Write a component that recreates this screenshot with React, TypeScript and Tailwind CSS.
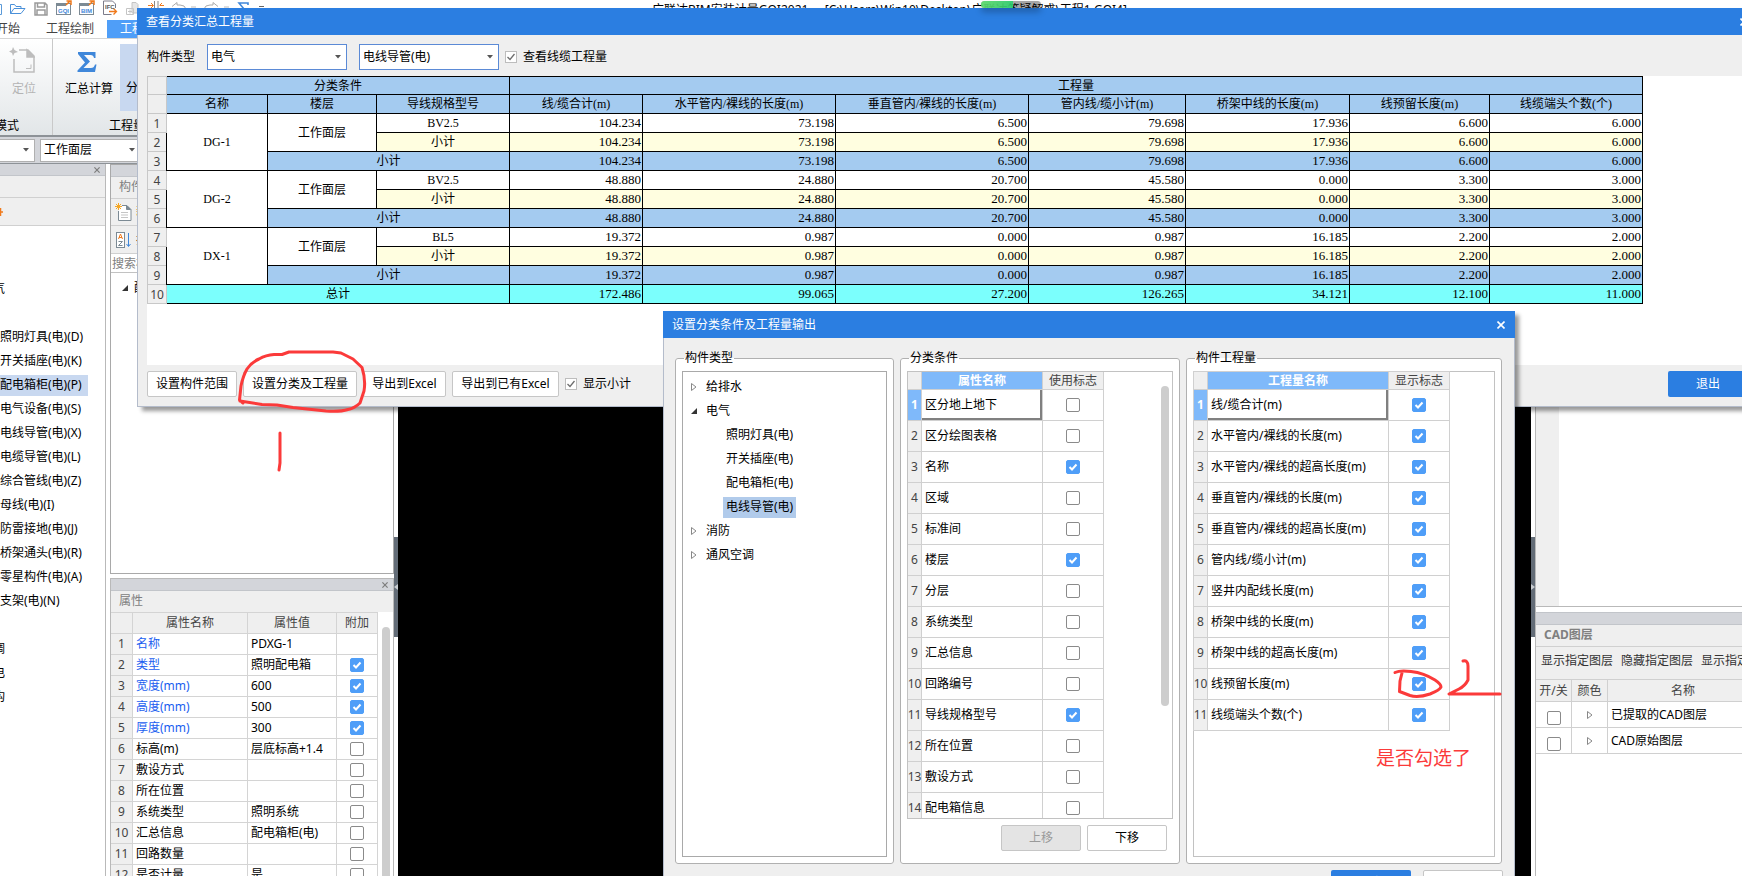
import { type ReactNode } from "react";
import clsx from "clsx";

const navItems = [
  "照明灯具(电)(D)",
  "开关插座(电)(K)",
  "配电箱柜(电)(P)",
  "电气设备(电)(S)",
  "电线导管(电)(X)",
  "电缆导管(电)(L)",
  "综合管线(电)(Z)",
  "母线(电)(I)",
  "防雷接地(电)(J)",
  "桥架通头(电)(R)",
  "零星构件(电)(A)",
  "支架(电)(N)",
];

const quantityHeaders = [
  "线/缆合计(m)",
  "水平管内/裸线的长度(m)",
  "垂直管内/裸线的长度(m)",
  "管内线/缆小计(m)",
  "桥架中线的长度(m)",
  "线预留长度(m)",
  "线缆端头个数(个)",
];

const groups = [
  {
    name: "DG-1",
    floor: "工作面层",
    model: "BV2.5",
    values: ["104.234", "73.198", "6.500", "79.698", "17.936", "6.600", "6.000"],
  },
  {
    name: "DG-2",
    floor: "工作面层",
    model: "BV2.5",
    values: ["48.880", "24.880", "20.700", "45.580", "0.000", "3.300", "3.000"],
  },
  {
    name: "DX-1",
    floor: "工作面层",
    model: "BL5",
    values: ["19.372", "0.987", "0.000", "0.987", "16.185", "2.200", "2.000"],
  },
];

const totals = ["172.486", "99.065", "27.200", "126.265", "34.121", "12.100", "11.000"];

interface FlagRow {
  label: string;
  checked: boolean;
}

const conditions: FlagRow[] = [
  { label: "区分地上地下", checked: false },
  { label: "区分绘图表格", checked: false },
  { label: "名称", checked: true },
  { label: "区域", checked: false },
  { label: "标准间", checked: false },
  { label: "楼层", checked: true },
  { label: "分层", checked: false },
  { label: "系统类型", checked: false },
  { label: "汇总信息", checked: false },
  { label: "回路编号", checked: false },
  { label: "导线规格型号", checked: true },
  { label: "所在位置", checked: false },
  { label: "敷设方式", checked: false },
  { label: "配电箱信息", checked: false },
];

const quantities: FlagRow[] = [
  "线/缆合计(m)",
  "水平管内/裸线的长度(m)",
  "水平管内/裸线的超高长度(m)",
  "垂直管内/裸线的长度(m)",
  "垂直管内/裸线的超高长度(m)",
  "管内线/缆小计(m)",
  "竖井内配线长度(m)",
  "桥架中线的长度(m)",
  "桥架中线的超高长度(m)",
  "线预留长度(m)",
  "线缆端头个数(个)",
].map((label) => ({ label, checked: true }));

const properties: { name: string; value: string; extra?: boolean; blue?: boolean }[] = [
  { name: "名称", value: "PDXG-1", blue: true },
  { name: "类型", value: "照明配电箱", extra: true, blue: true },
  { name: "宽度(mm)", value: "600", extra: true, blue: true },
  { name: "高度(mm)", value: "500", extra: true, blue: true },
  { name: "厚度(mm)", value: "300", extra: true, blue: true },
  { name: "标高(m)", value: "层底标高+1.4", extra: false },
  { name: "敷设方式", value: "", extra: false },
  { name: "所在位置", value: "", extra: false },
  { name: "系统类型", value: "照明系统", extra: false },
  { name: "汇总信息", value: "配电箱柜(电)", extra: false },
  { name: "回路数量", value: "", extra: false },
  { name: "是否计量", value: "是", extra: false },
];

export default function App() {
  return (
    <div className="relative flex h-screen flex-col overflow-hidden bg-white font-['Noto_Sans','Noto_Sans_CJK_SC',sans-serif] text-xs leading-4 text-black">
      <TitleBar />
      <RibbonTabs />
      <Ribbon />
      <FloorBar />
      <div className="flex min-h-0 flex-1">
        <NavPanel />
        <div className="ml-1 flex w-[284px] shrink-0 flex-col">
          <ComponentPanel />
          <PropertyPanel />
        </div>
        <SplitHandle side="left" />
        <div className="min-w-0 flex-1 bg-black" />
        <SplitHandle side="right" />
        <CadPanel />
      </div>
      <SummaryDialog />
      <SettingsDialog />
      <Annotations />
    </div>
  );
}

function Checkbox({ label, checked }: { label: string; checked: boolean }) {
  return (
    <span className="relative inline-block size-[14px] align-middle">
      <input
        type="checkbox"
        aria-label={label}
        defaultChecked={checked}
        className="peer block size-[14px] appearance-none rounded-[2px] border border-[#8a8a8a] bg-white checked:border-[#4f9ef8] checked:bg-[#4f9ef8]"
      />
      <svg
        viewBox="0 0 14 14"
        className="pointer-events-none absolute inset-0 hidden size-[14px] fill-none stroke-white stroke-2 peer-checked:block"
      >
        <path d="M3.5 7 6 9.5 10.5 4.5" />
      </svg>
    </span>
  );
}

function LabelledCheckbox({ label }: { label: string }) {
  return (
    <label className="flex items-center gap-[6px]">
      <span className="relative size-[12px]">
        <input
          type="checkbox"
          defaultChecked
          className="peer block size-[12px] appearance-none border border-[#bdbdbd] bg-white"
        />
        <svg
          viewBox="0 0 12 12"
          className="pointer-events-none absolute inset-0 hidden size-[12px] fill-none stroke-[#6e6e6e] peer-checked:block"
        >
          <path d="M2.5 6 5 8.5 9.5 3" strokeWidth="1.3" />
        </svg>
      </span>
      {label}
    </label>
  );
}

function Combo({ label, value, className }: { label: string; value: string; className: string }) {
  return (
    <span className={clsx("relative block shrink-0", className)}>
      <select aria-label={label} className="size-full appearance-none bg-white pr-4 pl-[3px] outline-none">
        <option>{value}</option>
      </select>
      <svg viewBox="0 0 6 4" className="pointer-events-none absolute top-1/2 right-[5px] h-1 w-[6px] -translate-y-1/2 fill-[#555]">
        <path d="M0 0h6L3 3.5z" />
      </svg>
    </span>
  );
}

function PushButton({ children, className, disabled }: { children: ReactNode; className?: string; disabled?: boolean }) {
  return (
    <button
      type="button"
      disabled={disabled}
      className={clsx(
        "h-[26px] shrink-0 rounded-[2px] border border-[#c6c6c6] whitespace-nowrap",
        disabled ? "bg-[#e4e4e4] text-[#9a9a9a]" : "bg-white",
        className,
      )}
    >
      {children}
    </button>
  );
}

function CloseMark({ className }: { className?: string }) {
  return (
    <svg viewBox="0 0 8 8" className={clsx("fill-none", className)}>
      <path d="M.5.5l7 7M7.5.5l-7 7" strokeWidth="1.6" />
    </svg>
  );
}

function TitleBar() {
  return (
    <div className="relative flex h-5 shrink-0 items-start bg-white">
      <svg width="270" height="20" viewBox="0 0 270 20" fill="none">
        <path d="M0 4.500h1.500v10H0" stroke="#5b9ad8" />
        {/* open */}
        <path d="M10.500 13.500v-9h4l1.500 2h5v2M10.500 13.500l3.500-5h11l-4 5z" stroke="#4a90d9" />
        {/* save */}
        <path d="M35 3h10l2 2v10H35zM37.500 3v4h7V3M37 15v-5h8v5" stroke="#9a9a9a" strokeWidth="1.500" />
        {/* GQI */}
        <rect x="56.500" y="3.500" width="14" height="11" stroke="#7c8a94" />
        <path d="M56 4h10v2H56z" fill="#7c8a94" />
        <path d="M66 5l4-4M66.500 1H71v4" stroke="#f07a1c" strokeWidth="1.500" />
        {/* BIM */}
        <rect x="79.500" y="3.500" width="14" height="11" stroke="#7c8a94" />
        <path d="M79 4h10v2h-10z" fill="#7c8a94" />
        <path d="M89 5l4-4M89.500 1H94v4" stroke="#f07a1c" strokeWidth="1.500" />
        {/* IFC */}
        <path d="M115.500 8V4l-3-3h-9v13.500h8" stroke="#7c7c8a" />
        <path d="M109 11.500h7M113.500 8.500l3 3-3 3" stroke="#f07a1c" strokeWidth="1.300" />
        {/* copy */}
        <path d="M132 2.500h4l2 2V13h-6z" fill="#e6e6e6" stroke="#c4c4c4" />
        <path d="M126.500 8.500h7v6h-7zM130 9.500v4M128 11.500h4" stroke="#c4c4c4" />
        {/* align */}
        <path d="M154.500 1v8M158 1v8" stroke="#888" />
        <path d="M148 5.500h5M151 3l2.500 2.500L151 8M164 5.500h-4M162 3l-2.500 2.500" stroke="#f07a1c" />
        {/* undo / redo */}
        <path d="M172 6.500l5-4v2.500h3q5 0 6 4M218 6.500l-5-4v2.500h-3q-5 0-6 4" stroke="#aaa" />
        <path d="M191 7h5M224 7h5" stroke="#bbb" />
        <path d="M248 5V3h-9l5 6" stroke="#3f87da" strokeWidth="1.600" />
        <path d="M259 6.500h5" stroke="#666" />
        <g fontFamily="Liberation Sans" fontWeight="700" fontSize="6" fill="#3f87da">
          <text x="58" y="13">GQI</text>
          <text x="81" y="13">BIM</text>
          <text x="105" y="9" fill="#555">IFC</text>
        </g>
      </svg>
      <div className="ml-[382px] leading-5 whitespace-nowrap">
        广联达BIM安装计量GQI2021 &nbsp;- &nbsp;[C:\Users\Win10\Desktop\广联达答疑解惑\工程1.GQI4]
      </div>
    </div>
  );
}

function RibbonTabs() {
  return (
    <div className="flex h-[19px] shrink-0 border-b border-[#d5d5d5] text-[#444]">
      <button type="button" className="-ml-1 w-6 whitespace-nowrap">开始</button>
      <button type="button" className="ml-[26px] w-12 whitespace-nowrap">工程绘制</button>
      <button type="button" className="ml-[13px] w-16 bg-[#4f9ef8] pl-[13px] text-left text-white">工程量</button>
    </div>
  );
}

function Ribbon() {
  return (
    <div className="flex h-[98px] shrink-0 border-b-2 border-[#8d9297] bg-linear-to-b from-white to-[#e2e6e8]">
      <div className="flex w-[53px] flex-col justify-between border-r border-[#c9c9c9] pt-[7px] pb-px">
        <button type="button" className="ml-3 flex w-6 flex-col items-center gap-[7px] text-[#b4b4b4]">
          <svg width="26" height="28" viewBox="0 0 26 28" fill="none" stroke="#bdbdbd" strokeWidth="1.5" className="-ml-1">
            <path d="M10 4h9l6 6v16H5V13" />
            <path d="M18 4v7h7z" fill="#bdbdbd" />
            <path d="M17 22.500h5v-4" strokeWidth="1" />
            <path d="M4 1l1.500 3L9 6 5.500 7 4 10 3 7 0 5.500 3 4z" fill="#bdbdbd" stroke="none" />
          </svg>
          <span className="whitespace-nowrap">定位</span>
        </button>
        <span className="-ml-[5px]">模式</span>
      </div>
      <div className="flex flex-1 flex-col justify-between pt-[5px] pb-px">
        <div className="flex">
          <button type="button" className="flex w-[67px] flex-col items-center gap-2 pt-2 pl-[5px]">
            <svg width="20" height="20" viewBox="0 0 20 20" fill="#3f87da" className="-ml-1">
              <path d="M1 0h17.500v6H17q-.5-3-3.500-3H7l6 6.500L6.500 16H14q3 0 4-3.500h1.500L18 20H.5v-1.500L8 10.500 1 2z" />
            </svg>
            <span className="pt-px whitespace-nowrap">汇总计算</span>
          </button>
          <button type="button" className="h-[67px] w-16 bg-[#c8d8f0] pt-[21px] pl-[6px] text-left">分类</button>
        </div>
        <span className="pl-[56px]">工程量</span>
      </div>
    </div>
  );
}

function FloorBar() {
  return (
    <div className="flex h-[27px] shrink-0 items-center gap-[5px] border-b border-[#8d9297] bg-[#d3d5da]">
      <Combo label="楼层" value="" className="h-[23px] w-[35px] border border-l-0 border-[#b0b0b0]" />
      <Combo label="分层" value="工作面层" className="h-[23px] w-[101px] border border-[#b0b0b0]" />
    </div>
  );
}

function PanelStrip({ closable = true }: { closable?: boolean }) {
  return (
    <div className="flex h-3 shrink-0 items-center justify-end border-b border-[#c2c5ca] bg-[#d3d5da] pr-[5px]">
      {closable && (
        <button type="button" aria-label="关闭">
          <CloseMark className="size-[6px] stroke-[#7d7d7d]" />
        </button>
      )}
    </div>
  );
}

function NavPanel() {
  return (
    <div className="flex w-[106px] shrink-0 flex-col border-r border-[#b9b9b9]">
      <PanelStrip />
      <div className="h-[22px] shrink-0 border-b border-[#d0d0d0] bg-[#efefef]" />
      <div className="flex h-7 shrink-0 items-center border-b border-[#d0d0d0] bg-[#efefef]">
        <svg width="4" height="12" viewBox="0 0 4 12" stroke="#f07a1c" strokeWidth="1.500" fill="none">
          <path d="M0 6h3M.5 2v8" />
        </svg>
      </div>
      <ul className="pt-[51px]">
        <NavParent>电气</NavParent>
        <li className="h-6" />
        {navItems.map((item) => (
          <li key={item} className="flex h-6 items-center">
            <button
              type="button"
              className={clsx("h-[21px] text-left whitespace-nowrap", item === "配电箱柜(电)(P)" && "w-[88px] bg-[#c8d8f0]")}
            >
              {item}
            </button>
          </li>
        ))}
        <li className="h-6" />
        <NavParent>通风空调</NavParent>
        <NavParent>智控弱电</NavParent>
        <NavParent>建筑结构</NavParent>
      </ul>
    </div>
  );
}

function NavParent({ children }: { children: ReactNode }) {
  return (
    <li className="flex h-6 w-[5px] items-center justify-end overflow-hidden">
      <button type="button" className="whitespace-nowrap">{children}</button>
    </li>
  );
}

function ComponentPanel() {
  return (
    <section className="mb-[4px] flex h-[410px] shrink-0 flex-col border border-[#a9a9a9]">
      <PanelStrip closable={false} />
      <h2 className="h-[22px] shrink-0 border-b border-[#d0d0d0] bg-[#efefef] pt-[2px] pl-2 text-[#808080]">构件列表</h2>
      <div className="flex h-[27px] shrink-0 items-center gap-1 border-b border-[#d0d0d0] bg-[#efefef] pl-1">
        <svg width="17" height="18" viewBox="0 0 17 18" fill="none" stroke="#7c8a94">
          <path d="M7 2.500h5l4 4v11H3.500V8" fill="#fff" />
          <path d="M11.500 2.500v4h4z" fill="#7c8a94" />
          <path d="M6 9.500h7M6 12h7M6 14.500h7" stroke="#c5c5c5" />
          <path d="M1 1l5 5M6 1L1 6M3.500 0v7M0 3.500h7" stroke="#f5a623" />
        </svg>
        <span className="text-[#f07a1c]">新建</span>
      </div>
      <div className="flex h-7 shrink-0 items-center gap-1 border-b border-[#d0d0d0] bg-[#efefef] pl-[5px]">
        <svg width="16" height="18" viewBox="0 0 16 18" fill="none">
          <rect x=".5" y="1.500" width="8" height="15" stroke="#7c8a94" fill="#fff" />
          <path d="M2.500 8l2-5 2 5M3 6.500h3" stroke="#f07a1c" />
          <path d="M2.500 10.500h4l-4 4h4" stroke="#7c8a94" />
          <path d="M12.500 2v13M10.500 13l2 2.500 2-2.500" stroke="#3f87da" />
        </svg>
        <span>排序</span>
      </div>
      <input aria-label="搜索构件" placeholder="搜索构件..." className="h-[19px] shrink-0 border-b border-[#c2c2c2] pl-[1px] placeholder:text-[#808080]" />
      <div className="flex items-center gap-[6px] pt-[7px] pl-[11px]">
        <svg width="6" height="6" viewBox="0 0 6 6"><path d="M6 0v6H0z" fill="#333" /></svg>
        <span>配电箱柜</span>
      </div>
    </section>
  );
}

function PropertyPanel() {
  const cell = "border border-[#d4d4d4]";
  return (
    <section className="flex min-h-0 flex-1 flex-col overflow-hidden border-x border-t border-[#b9b9b9]">
      <PanelStrip />
      <h2 className="h-[21px] shrink-0 bg-[#efefef] pt-[2px] pl-2 text-[#808080]">属性</h2>
      <div className="flex min-h-0">
        <table className="-ml-px w-[268px] shrink-0 table-fixed border-collapse self-start">
          <colgroup>
            <col className="w-[22px]" />
            <col className="w-[115px]" />
            <col className="w-[89px]" />
            <col className="w-[41px]" />
          </colgroup>
          <thead>
            <tr className="h-[21px] bg-[#efefef] text-[#444]">
              <th className={cell} />
              <th className={clsx(cell, "font-normal")}>属性名称</th>
              <th className={clsx(cell, "font-normal")}>属性值</th>
              <th className={clsx(cell, "font-normal")}>附加</th>
            </tr>
          </thead>
          <tbody>
            {properties.map((p, i) => (
              <tr key={p.name} className="h-[21px]">
                <th className={clsx(cell, "bg-[#efefef] font-normal text-[#444]")}>{i + 1}</th>
                <td className={clsx(cell, "pl-[3px]", p.blue && "text-[#1a5ef0]")}>{p.name}</td>
                <td className={clsx(cell, "pl-[3px]")}>{p.value}</td>
                <td className={clsx(cell, "text-center leading-[0]")}>
                  {p.extra !== undefined && <Checkbox label={`${p.name}附加`} checked={p.extra} />}
                </td>
              </tr>
            ))}
          </tbody>
        </table>
        <div className="mt-[15px] ml-1 w-2 rounded-t bg-[#cdcdcd]" />
      </div>
    </section>
  );
}

function SplitHandle({ side }: { side: "left" | "right" }) {
  return (
    <div className="w-[4px] shrink-0 bg-white pt-[373px]">
      <div className="flex h-[100px] items-center bg-[#636c77]">
        <svg width="4" height="6" viewBox="0 0 4 6" fill="#c9cdd2">
          <path d={side === "left" ? "M4 0v6L0 3z" : "M0 0v6l4-3z"} />
        </svg>
      </div>
    </div>
  );
}

function CadPanel() {
  const cell = "border border-[#d0d0d0]";
  return (
    <div className="flex w-[207px] shrink-0 flex-col overflow-hidden border-l border-[#b9b9b9]">
      <div className="h-[443px] shrink-0 border-b border-[#b9b9b9]">
        <div className="h-full w-[23px] bg-[#efefef]" />
      </div>
      <div className="mt-[5px] border-t border-[#c2c5ca]">
        <PanelStrip closable={false} />
      </div>
      <h2 className="h-[22px] shrink-0 border-b border-[#d0d0d0] bg-[#efefef] pt-[2px] pl-2 font-bold text-[#808080]">CAD图层</h2>
      <div className="flex h-8 shrink-0 items-start gap-2 overflow-hidden bg-[#efefef] pt-[6px] pl-[5px] whitespace-nowrap text-[#333]">
        <button type="button">显示指定图层</button>
        <button type="button">隐藏指定图层</button>
        <button type="button">显示指定图元</button>
      </div>
      <table className="-ml-px w-[280px] table-fixed border-collapse">
        <colgroup>
          <col className="w-9" />
          <col className="w-9" />
          <col />
        </colgroup>
        <thead>
          <tr className="h-[22px] bg-[#efefef] text-[#444]">
            <th className={clsx(cell, "font-normal whitespace-nowrap")}>开/关</th>
            <th className={clsx(cell, "font-normal")}>颜色</th>
            <th className={clsx(cell, "pr-14 font-normal")}>名称</th>
          </tr>
        </thead>
        <tbody>
          {["已提取的CAD图层", "CAD原始图层"].map((name) => (
            <tr key={name} className="h-[26px]">
              <td className={clsx(cell, "pt-[6px] text-center leading-[0]")}>
                <Checkbox label={name} checked={false} />
              </td>
              <td className={cell}>
                <button type="button" aria-label="展开" className="mx-auto block">
                  <TreeArrow />
                </button>
              </td>
              <td className={clsx(cell, "pl-[3px]")}>{name}</td>
            </tr>
          ))}
        </tbody>
      </table>
    </div>
  );
}

function TreeArrow({ open }: { open?: boolean }) {
  return open ? (
    <svg width="6" height="8" viewBox="0 0 6 8"><path d="M6 1v6H0z" fill="#333" /></svg>
  ) : (
    <svg width="6" height="8" viewBox="0 0 6 8"><path d="M.5.5 5 4 .5 7.500z" fill="none" stroke="#888" /></svg>
  );
}

function SummaryDialog() {
  return (
    <section className="absolute top-2 -right-4 left-[137px] flex h-[399px] flex-col border-b border-l border-[#b4bccb] bg-[#efefef] shadow-[5px_4px_4px_rgba(0,0,0,0.4)]">
      <header className="-ml-px flex h-[27px] shrink-0 items-center justify-between bg-[#2b7ee1] pr-[10px] pl-[9px] text-white">
        <h1>查看分类汇总工程量</h1>
        <button type="button" aria-label="关闭"><CloseMark className="size-2 stroke-white" /></button>
      </header>
      <div className="flex h-[41px] shrink-0 items-center pt-[6px] pb-[3px] pl-[9px]">
        <span className="mr-3">构件类型</span>
        <Combo label="构件类型" value="电气" className="mr-3 h-[26px] w-[140px] border border-[#5b8ad6]" />
        <Combo label="构件" value="电线导管(电)" className="mr-[6px] h-[26px] w-[140px] border border-[#5b8ad6]" />
        <LabelledCheckbox label="查看线缆工程量" />
      </div>
      <div className="ml-[9px] h-[289px] shrink-0 overflow-hidden bg-white">
        <SummaryTable />
      </div>
      <footer className="flex flex-1 items-center pr-[10px] pb-[3px] pl-[9px]">
        <PushButton className="mr-[6px] w-[90px]">设置构件范围</PushButton>
        <PushButton className="mr-[6px] w-[114px]">设置分类及工程量</PushButton>
        <PushButton className="mr-[6px] w-[83px]">导出到Excel</PushButton>
        <PushButton className="mr-[6px] w-[107px]">导出到已有Excel</PushButton>
        <LabelledCheckbox label="显示小计" />
        <button type="button" className="ml-auto h-[26px] w-20 rounded-[2px] bg-[#2b7ee1] text-white">退出</button>
      </footer>
    </section>
  );
}

const gridCell = "border border-black p-0";

function RowNumber({ children }: { children?: ReactNode }) {
  return (
    <th className="border border-[#c8c8c8] bg-[#efefef] p-0 pt-px font-['Noto_Sans'] text-xs font-normal text-[#444]">
      {children}
    </th>
  );
}

function ValueCells({ values }: { values: string[] }) {
  return values.map((value, i) => (
    <td key={i} className={clsx(gridCell, "pr-px text-right text-[13px]")}>
      {value}
    </td>
  ));
}

function SummaryTable() {
  return (
    <table className="w-[1496px] table-fixed border-collapse font-['Liberation_Serif','Noto_Sans_CJK_SC',serif] text-xs leading-4">
      <colgroup>
        <col className="w-[19px]" />
        <col className="w-[101px]" />
        <col className="w-[109px]" />
        <col className="w-[133px]" />
        <col className="w-[133px]" />
        <col className="w-[193px]" />
        <col className="w-[193px]" />
        <col className="w-[157px]" />
        <col className="w-[164px]" />
        <col className="w-[140px]" />
        <col className="w-[153px]" />
      </colgroup>
      <thead className="bg-[#a4cbf0]">
        <tr className="h-[18px]">
          <RowNumber />
          <th colSpan={3} className={clsx(gridCell, "font-normal")}>分类条件</th>
          <th colSpan={7} className={clsx(gridCell, "font-normal")}>工程量</th>
        </tr>
        <tr className="h-[19px]">
          <RowNumber />
          {["名称", "楼层", "导线规格型号", ...quantityHeaders].map((h) => (
            <th key={h} className={clsx(gridCell, "font-normal")}>{h}</th>
          ))}
        </tr>
      </thead>
      {groups.map((g, i) => (
        <tbody key={g.name} className="text-center">
          <tr className="h-[19px]">
            <RowNumber>{i * 3 + 1}</RowNumber>
            <td rowSpan={3} className={gridCell}>{g.name}</td>
            <td rowSpan={2} className={gridCell}>{g.floor}</td>
            <td className={gridCell}>{g.model}</td>
            <ValueCells values={g.values} />
          </tr>
          <tr className="h-[19px] bg-[#fffee0]">
            <RowNumber>{i * 3 + 2}</RowNumber>
            <td className={gridCell}>小计</td>
            <ValueCells values={g.values} />
          </tr>
          <tr className="h-[19px] bg-[#a4cbf0]">
            <RowNumber>{i * 3 + 3}</RowNumber>
            <td colSpan={2} className={gridCell}>小计</td>
            <ValueCells values={g.values} />
          </tr>
        </tbody>
      ))}
      <tfoot className="bg-[#7bfffd] text-center">
        <tr className="h-[19px]">
          <RowNumber>10</RowNumber>
          <td colSpan={3} className={gridCell}>总计</td>
          <ValueCells values={totals} />
        </tr>
      </tfoot>
    </table>
  );
}

function SettingsDialog() {
  return (
    <section className="absolute top-[311px] left-[663px] flex h-[600px] w-[852px] flex-col border-x border-[#b4bccb] bg-[#efefef] shadow-[4px_4px_4px_rgba(0,0,0,0.4)]">
      <header className="-mx-px flex h-[27px] shrink-0 items-center justify-between bg-[#2b7ee1] pr-[10px] pl-[9px] text-white">
        <h1>设置分类条件及工程量输出</h1>
        <button type="button" aria-label="关闭"><CloseMark className="size-2 stroke-white" /></button>
      </header>
      <div className="flex h-[526px] shrink-0 gap-[6px] pt-3 pr-3 pl-[11px]">
        <Group title="构件类型" className="w-[219px]">
          <TypeTree />
        </Group>
        <Group title="分类条件" className="w-[280px]">
          <div className="flex h-[448px] shrink-0 justify-between overflow-hidden border border-[#c2c2c2] pr-[3px]">
            <FlagTable rows={conditions} nameHeader="属性名称" flagHeader="使用标志" narrow />
            <div className="mt-[14px] h-[320px] w-2 rounded bg-[#cdcdcd]" />
          </div>
          <div className="mt-[6px] flex justify-end gap-[6px] pr-[6px]">
            <PushButton disabled className="w-20">上移</PushButton>
            <PushButton className="w-20">下移</PushButton>
          </div>
        </Group>
        <Group title="构件工程量" className="flex-1">
          <div className="flex-1 border border-[#c2c2c2]">
            <FlagTable rows={quantities} nameHeader="工程量名称" flagHeader="显示标志" />
          </div>
        </Group>
      </div>
      <footer className="flex justify-end gap-3 pt-[6px] pr-[11px]">
        <button type="button" className="h-[26px] w-20 rounded-[2px] bg-[#2b7ee1] text-white">确定</button>
        <PushButton className="w-20">取消</PushButton>
      </footer>
    </section>
  );
}

function Group({ title, className, children }: { title: string; className: string; children: ReactNode }) {
  return (
    <fieldset className={clsx("flex h-[514px] min-w-0 flex-col rounded-[3px] border border-[#b0b0b0] bg-white px-[6px] pb-[6px]", className)}>
      <legend className="ml-[2px] h-4 px-px">{title}</legend>
      <div className="flex min-h-0 flex-1 flex-col pt-[5px]">{children}</div>
    </fieldset>
  );
}

function TypeTree() {
  const children = ["照明灯具(电)", "开关插座(电)", "配电箱柜(电)", "电线导管(电)"];
  return (
    <ul className="flex-1 border border-[#a9a9a9] pt-[3px]">
      {["给排水", "电气", "消防", "通风空调"].map((name) => (
        <li key={name}>
          <button type="button" className="flex h-6 items-center gap-[9px] pl-2">
            <TreeArrow open={name === "电气"} />
            {name}
          </button>
          {name === "电气" && (
            <ul>
              {children.map((child) => (
                <li key={child} className="flex h-6 items-center pl-10">
                  <button
                    type="button"
                    className={clsx("h-[21px] px-[3px]", child === "电线导管(电)" && "bg-[#b1cbeb]")}
                  >
                    {child}
                  </button>
                </li>
              ))}
            </ul>
          )}
        </li>
      ))}
    </ul>
  );
}

interface FlagTableProps {
  rows: FlagRow[];
  nameHeader: string;
  flagHeader: string;
  narrow?: boolean;
}

function FlagTable({ rows, nameHeader, flagHeader, narrow }: FlagTableProps) {
  const cell = "border border-[#d0d0d0] p-0";
  return (
    <table className={clsx("-mt-px -ml-px table-fixed border-collapse self-start", narrow ? "w-[197px]" : "w-[257px]")}>
      <colgroup>
        <col className="w-[14px]" />
        <col />
        <col className="w-[61px]" />
      </colgroup>
      <thead>
        <tr className="h-[18px] leading-[15px]">
          <th className={clsx(cell, "bg-[#efefef]")} />
          <th className={clsx(cell, "bg-[#7fb9fa] font-bold text-white")}>{nameHeader}</th>
          <th className={clsx(cell, "bg-[#efefef] font-normal text-[#444]")}>{flagHeader}</th>
        </tr>
      </thead>
      <tbody>
        {rows.map((row, i) => (
          <tr key={row.label} className="h-[31px]">
            <th className={clsx(cell, i === 0 ? "bg-[#7fb9fa] font-bold text-white" : "bg-[#efefef] font-normal text-[#444]")}>
              <span className="flex justify-center">{i + 1}</span>
            </th>
            <td className={clsx(cell, "pl-[3px] whitespace-nowrap", i === 0 && "shadow-[inset_-2px_-2px_0_#808080]")}>{row.label}</td>
            <td className={clsx(cell, "text-center leading-[0]")}>
              <Checkbox label={row.label} checked={row.checked} />
            </td>
          </tr>
        ))}
      </tbody>
    </table>
  );
}

function Annotations() {
  return (
    <div className="pointer-events-none absolute inset-0">
      <div className="absolute top-px left-[981px] flex h-[7px] w-[60px] overflow-hidden rounded-full bg-black/35 shadow-[0_4px_6px_rgba(0,0,0,0.25)]">
        <div className="w-8 bg-linear-to-r from-[#5fe070] to-[#2bd16f] opacity-90" />
      </div>
      <svg className="absolute inset-0 size-full fill-none stroke-[#fb3a3a] stroke-[3]" strokeLinecap="round" strokeLinejoin="round">
        <path d="M243 403l-3.500-3L241 386Q243 376 247 369 252 362 259 359 266 355 274 354.500L282 354.500 289 352H333L341 353 353 359 362 367.500Q366 380 364 391L360 403Q355 408 348 409.500 340 412 326 411L307 409 293 407.500 277 405 262 404.500 240 401" />
        <path d="M280 433V463L279 470" />
        <path d="M1395 672.500Q1400 670 1411 671.500 1424 673 1435 680 1441 684 1441 687 1440 690 1430 694 1418 698 1410 695.500L1399.500 691.500 1400 681 1402 673" />
        <path d="M1463 661Q1468 660 1468 666V680Q1465 686 1459 689L1449 694H1500" />
      </svg>
      <p className="absolute top-[746px] left-[1376px] text-[19px] leading-6 whitespace-nowrap text-[#fb3a3a]">是否勾选了</p>
    </div>
  );
}
